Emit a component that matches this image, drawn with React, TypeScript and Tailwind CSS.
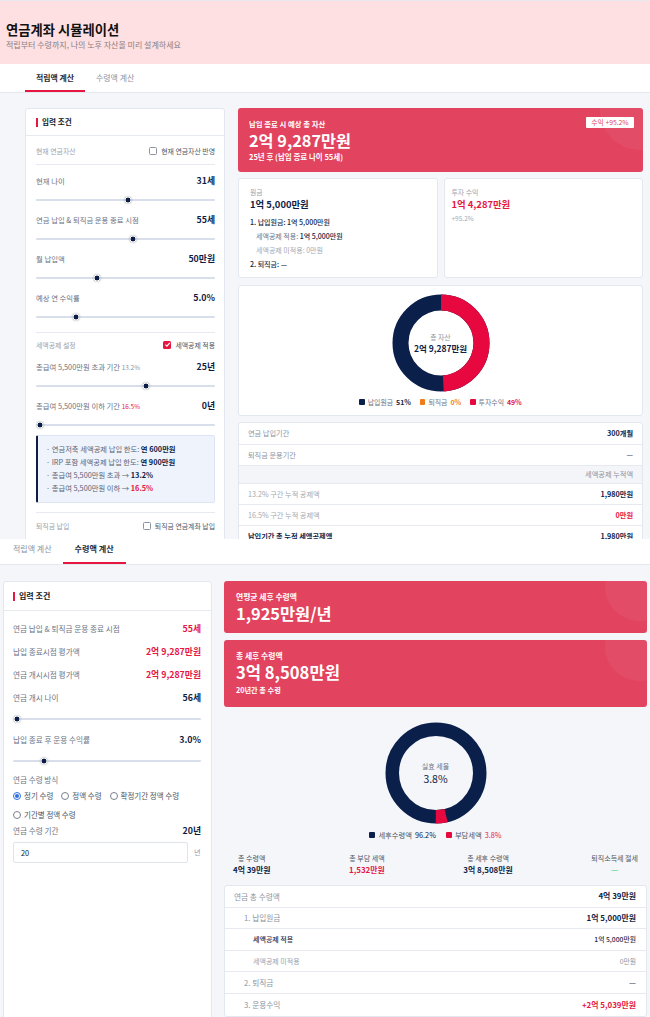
import React from "react";

// Two stacked views of the pension simulator: the accumulation tab on top,
// the payout tab below it. Everything is static sample data.

function Slider({ p, h = "h-[20px]" }: { p: number; h?: string }) {
  return (
    <div className={`relative ${h}`}>
      <div className="absolute left-0 right-0 top-1/2 h-[2px] -translate-y-1/2 rounded-full bg-[#d9dfea]" />
      <div
        className="absolute top-1/2 h-[7px] w-[7px] -translate-x-1/2 -translate-y-1/2 rounded-full border border-white bg-[#0c1d4a] shadow-[0_0_2px_rgba(0,0,0,0.35)]"
        style={{ left: `calc(3.5px + ${p} * (100% - 7px))` }}
      />
    </div>
  );
}

function Check({ on }: { on?: boolean }) {
  return on ? (
    <span className="flex h-[8px] w-[8px] items-center justify-center rounded-[1.5px] bg-[#e5163f]">
      <svg viewBox="0 0 10 10" className="h-[7px] w-[7px]">
        <path d="M2 5.2 4.2 7.4 8.3 2.7" fill="none" stroke="white" strokeWidth="1.7" />
      </svg>
    </span>
  ) : (
    <span className="h-[8px] w-[8px] rounded-[1.5px] border border-[#8d939e] bg-white" />
  );
}

function Radio({ on, label }: { on?: boolean; label: string }) {
  return (
    <span className="flex items-center gap-[3px] text-[7.5px] text-[#4b5563]">
      {on ? (
        <span className="flex h-[8px] w-[8px] items-center justify-center rounded-full border border-[#2f6fe0] bg-white">
          <span className="h-[4px] w-[4px] rounded-full bg-[#2f6fe0]" />
        </span>
      ) : (
        <span className="h-[8px] w-[8px] rounded-full border border-[#7b818c] bg-white" />
      )}
      {label}
    </span>
  );
}

function Row({
  label,
  value,
  valueClass = "text-[#0f1d45]",
  h = "h-[19px]",
  size = "text-[7.35px]",
}: {
  label: React.ReactNode;
  value: string;
  valueClass?: string;
  h?: string;
  size?: string;
}) {
  return (
    <div className={`flex items-center justify-between ${h}`}>
      <span className={`${size} text-[#6b7384]`}>{label}</span>
      <span className={`text-[8.8px] font-bold ${valueClass}`}>{value}</span>
    </div>
  );
}

function CardHeader({ pad, size }: { pad: string; size: string }) {
  return (
    <div className={`flex items-center gap-[4px] border-b border-[#e6e9f0] ${pad}`}>
      <span className="h-[9px] w-[2px] bg-[#e5163f]" />
      <span className={`${size} font-bold text-[#111827]`}>입력 조건</span>
    </div>
  );
}

function Donut({ size, r, stroke, redFrac, redStart }: { size: number; r: number; stroke: number; redFrac: number; redStart: number }) {
  const c = 2 * Math.PI * r;
  const mid = size / 2;
  return (
    <svg width={size} height={size} viewBox={`0 0 ${size} ${size}`}>
      <g transform={`rotate(-90 ${mid} ${mid})`}>
        <circle cx={mid} cy={mid} r={r} fill="none" stroke="#0b1f4b" strokeWidth={stroke} />
        <circle
          cx={mid}
          cy={mid}
          r={r}
          fill="none"
          stroke="#e6083e"
          strokeWidth={stroke}
          strokeDasharray={`${redFrac * c} ${c}`}
          strokeDashoffset={-redStart * c}
        />
      </g>
    </svg>
  );
}

function TopView() {
  return (
    <div className="h-[539px] overflow-hidden border-t border-[#e6e8ee]">
      <div className="h-[63px] bg-[#ffe0e2] pl-[6px] pt-[20px]">
        <div className="text-[13.3px] font-bold leading-[18px] text-[#111]">연금계좌 시뮬레이션</div>
        <div className="text-[8px] leading-[11px] text-[#8a7d80]">적립부터 수령까지, 나의 노후 자산을 미리 설계하세요</div>
      </div>
      <div className="flex h-[29px] border-b border-[#e5e8ef] bg-white pl-[25px]">
        <div className="relative flex items-center px-[11px] text-[7.9px] font-bold text-[#1f2937]">
          적립액 계산
          <span className="absolute bottom-0 left-0 right-0 h-[2px] bg-[#e5163f]" />
        </div>
        <div className="flex items-center px-[11px] text-[7.9px] text-[#8b93a1]">수령액 계산</div>
      </div>

      <div className="flex h-[446px] gap-[13px] bg-[#f4f6fa] pl-[25px] pr-[7px] pt-[15px]">
        {/* inputs */}
        <div className="h-[480px] w-[200px] shrink-0 rounded-[3px] border border-[#e3e7ef] bg-white">
          <CardHeader pad="h-[27px] px-[10px]" size="text-[7.6px]" />
          <div className="pl-[10px] pr-[9px]">
            <div className="flex h-[29px] items-center justify-between border-b border-[#e6e9f0] pt-[3px]">
              <span className="text-[6.9px] text-[#9aa1ad]">현재 연금자산</span>
              <span className="flex items-center gap-[4px] text-[6.9px] text-[#4b5563]">
                <Check />
                현재 연금자산 반영
              </span>
            </div>
            <div className="pt-[6px]">
              <Row label="현재 나이" value="31세" />
              <Slider p={0.514} />
              <Row label="연금 납입 & 퇴직금 운용 종료 시점" value="55세" />
              <Slider p={0.544} />
              <Row label="월 납입액" value="50만원" />
              <Slider p={0.334} />
              <Row label="예상 연 수익률" value="5.0%" />
              <Slider p={0.212} />
            </div>
            <div className="mt-[5px] border-t border-[#e6e9f0]">
              <div className="flex h-[24px] items-center justify-between">
                <span className="text-[6.9px] text-[#9aa1ad]">세액공제 설정</span>
                <span className="flex items-center gap-[4px] text-[6.9px] text-[#4b5563]">
                  <Check on />
                  세액공제 적용
                </span>
              </div>
              <Row
                label={
                  <>
                    총급여 5,500만원 초과 기간 <span className="text-[6.4px] text-[#8b93a1]">13.2%</span>
                  </>
                }
                value="25년"
              />
              <Slider p={0.619} />
              <Row
                label={
                  <>
                    총급여 5,500만원 이하 기간 <span className="text-[6.4px] text-[#e5163f]">16.5%</span>
                  </>
                }
                value="0년"
              />
              <Slider p={0} />
              <div className="rounded-[2px] border border-l-2 border-[#dde4f2] border-l-[#0f1d45] bg-[#eef3fc] py-[7px] pl-[8px] text-[7.3px] leading-[13px] text-[#5b6475]">
                <div>
                  · 연금저축 세액공제 납입 한도: <b className="text-[#0f1d45]">연 600만원</b>
                </div>
                <div>
                  · IRP 포함 세액공제 납입 한도: <b className="text-[#0f1d45]">연 900만원</b>
                </div>
                <div>
                  · 총급여 5,500만원 초과 → <b className="text-[#0f1d45]">13.2%</b>
                </div>
                <div>
                  · 총급여 5,500만원 이하 → <b className="text-[#e5163f]">16.5%</b>
                </div>
              </div>
            </div>
            <div className="mt-[9px] flex h-[28px] items-center justify-between border-t border-[#e6e9f0]">
              <span className="text-[6.9px] text-[#9aa1ad]">퇴직금 납입</span>
              <span className="flex items-center gap-[4px] text-[6.9px] text-[#4b5563]">
                <Check />
                퇴직금 연금계좌 납입
              </span>
            </div>
          </div>
        </div>

        {/* results */}
        <div className="min-w-0 flex-1">
          <div className="relative h-[64px] overflow-hidden rounded-[3px] bg-[#e2435f] pl-[11px] pt-[11px] text-white">
            <div className="absolute right-[-37px] top-[-38px] h-[80px] w-[80px] rounded-full bg-white/[0.05]" />
            <div className="text-[7.4px] font-bold leading-[10px]">납입 종료 시 예상 총 자산</div>
            <div className="text-[16.3px] font-bold leading-[22px]">2억 9,287만원</div>
            <div className="text-[7.5px] font-bold leading-[12px]">25년 후 (납입 종료 나이 55세)</div>
            <div className="absolute right-[9px] top-[9px] flex h-[11px] w-[48px] items-center justify-center rounded-[1px] bg-white text-[6.8px] text-[#e2435f]">
              수익 +95.2%
            </div>
          </div>

          <div className="mt-[6px] grid h-[100px] grid-cols-2 gap-[6px]">
            <div className="rounded-[3px] border border-[#e3e7ef] bg-white pl-[11px] pt-[8px]">
              <div className="text-[6.9px] leading-[10px] text-[#9aa1ad]">원금</div>
              <div className="text-[9.4px] font-bold leading-[14px] text-[#0f1d45]">1억 5,000만원</div>
              <div className="mt-[4px] text-[7px] leading-[14px]">
                <div className="font-medium text-[#0f1d45]">1. 납입원금: 1억 5,000만원</div>
                <div className="pl-[6px] text-[#6b7384]">
                  세액공제 적용: <span className="font-medium text-[#0f1d45]">1억 5,000만원</span>
                </div>
                <div className="pl-[6px] text-[#a3a9b4]">세액공제 미적용: 0만원</div>
                <div className="font-medium text-[#0f1d45]">2. 퇴직금: —</div>
              </div>
            </div>
            <div className="rounded-[3px] border border-[#e3e7ef] bg-white pl-[7px] pt-[8px]">
              <div className="text-[6.9px] leading-[10px] text-[#9aa1ad]">투자 수익</div>
              <div className="text-[9.4px] font-bold leading-[14px] text-[#e5163f]">1억 4,287만원</div>
              <div className="text-[6.5px] leading-[14px] text-[#a3a9b4]">+95.2%</div>
            </div>
          </div>

          <div className="mt-[7px] flex h-[131px] flex-col items-center rounded-[3px] border border-[#e3e7ef] bg-white pt-[7px]">
            <div className="relative h-[100px] w-[100px]">
              <Donut size={100} r={40.5} stroke={16} redFrac={0.49} redStart={0} />
              <div className="absolute inset-0 flex flex-col items-center justify-center pt-[1px]">
                <span className="text-[6.8px] leading-[10px] text-[#8b93a1]">총 자산</span>
                <span className="text-[8.5px] font-bold leading-[13px] text-[#0f1d45]">2억 9,287만원</span>
              </div>
            </div>
            <div className="mt-[4px] flex items-center gap-[9px] text-[6.9px] leading-[10px]">
              <span className="flex items-center gap-[3px] text-[#6b7384]">
                <span className="h-[5.5px] w-[5.5px] rounded-[1px] bg-[#0b1f4b]" />
                납입원금 <b className="text-[#0f1d45]">51%</b>
              </span>
              <span className="flex items-center gap-[3px] text-[#6b7384]">
                <span className="h-[5.5px] w-[5.5px] rounded-[1px] bg-[#f07d1a]" />
                퇴직금 <b className="text-[#f07d1a]">0%</b>
              </span>
              <span className="flex items-center gap-[3px] text-[#6b7384]">
                <span className="h-[5.5px] w-[5.5px] rounded-[1px] bg-[#e6083e]" />
                투자수익 <b className="text-[#e5163f]">49%</b>
              </span>
            </div>
          </div>

          <div className="mt-[6px] rounded-[3px] border border-[#e3e7ef] bg-white text-[7.2px]">
            <div className="flex h-[22px] items-center justify-between border-b border-[#e6e9f0] px-[9px]">
              <span className="text-[#8b93a1]">연금 납입기간</span>
              <span className="font-bold text-[#0f1d45]">300개월</span>
            </div>
            <div className="flex h-[21px] items-center justify-between border-b border-[#e6e9f0] px-[9px]">
              <span className="text-[#8b93a1]">퇴직금 운용기간</span>
              <span className="font-bold text-[#6b7384]">—</span>
            </div>
            <div className="flex h-[18px] items-center justify-end border-b border-[#e6e9f0] bg-[#f3f5f9] px-[9px]">
              <span className="text-[#8b93a1]">세액공제 누적액</span>
            </div>
            <div className="flex h-[21px] items-center justify-between border-b border-[#e6e9f0] px-[9px]">
              <span className="text-[#a3a9b4]">13.2% 구간 누적 공제액</span>
              <span className="font-bold text-[#0f1d45]">1,980만원</span>
            </div>
            <div className="flex h-[21px] items-center justify-between border-b border-[#e6e9f0] px-[9px]">
              <span className="text-[#a3a9b4]">16.5% 구간 누적 공제액</span>
              <span className="font-bold text-[#e5163f]">0만원</span>
            </div>
            <div className="flex h-[21px] items-center justify-between px-[9px]">
              <span className="font-bold text-[#0f1d45]">납입기간 총 누적 세액공제액</span>
              <span className="font-bold text-[#0f1d45]">1,980만원</span>
            </div>
          </div>
        </div>
      </div>
    </div>
  );
}

function Stat({ label, value, valueClass }: { label: string; value: string; valueClass: string }) {
  return (
    <div className="flex flex-col items-center">
      <span className="text-[7px] leading-[12px] text-[#4b5563]">{label}</span>
      <span className={`text-[7.9px] font-bold leading-[12px] ${valueClass}`}>{value}</span>
    </div>
  );
}

function TRow({ label, value, labelClass, valueClass, last }: { label: string; value: string; labelClass: string; valueClass: string; last?: boolean }) {
  return (
    <div className={`flex h-[21.6px] items-center justify-between pl-[9px] pr-[10px] ${last ? "" : "border-b border-[#e6e9f0]"}`}>
      <span className={labelClass}>{label}</span>
      <span className={valueClass}>{value}</span>
    </div>
  );
}

function BottomView() {
  return (
    <div className="h-[478px] overflow-hidden">
      <div className="flex h-[26px] border-b border-[#e5e8ef] bg-white pl-[2px]">
        <div className="flex items-start px-[11px] pt-[3px] text-[8px] leading-[14px] text-[#8b93a1]">적립액 계산</div>
        <div className="relative flex items-start px-[12px] pt-[3px] text-[8.1px] font-bold leading-[14px] text-[#1f2937]">
          수령액 계산
          <span className="absolute bottom-0 left-0 right-0 h-[2px] bg-[#e5163f]" />
        </div>
      </div>

      <div className="flex h-[460px] gap-[12px] bg-[#f4f6fa] pl-[3px] pr-[3px] pt-[16px]">
        <div className="h-[520px] w-[209px] shrink-0 rounded-[3px] border border-[#e3e7ef] bg-white">
          <CardHeader pad="h-[29px] px-[9px]" size="text-[8px]" />
          <div className="pl-[9px] pr-[10px] pt-[6px]">
            <Row label="연금 납입 & 퇴직금 운용 종료 시점" value="55세" valueClass="text-[#e5163f]" h="h-[23px]" size="text-[7.65px]" />
            <Row label="납입 종료시점 평가액" value="2억 9,287만원" valueClass="text-[#e5163f]" h="h-[23px]" size="text-[7.65px]" />
            <Row label="연금 개시시점 평가액" value="2억 9,287만원" valueClass="text-[#e5163f]" h="h-[23px]" size="text-[7.65px]" />
            <Row label="연금 개시 나이" value="56세" h="h-[23px]" size="text-[7.65px]" />
            <Slider p={0} h="h-[19px]" />
            <Row label="납입 종료 후 운용 수익률" value="3.0%" h="h-[23px]" size="text-[7.65px]" />
            <Slider p={0.152} h="h-[19px]" />
            <div className="flex h-[19px] items-center text-[7.6px] text-[#6b7384]">연금 수령 방식</div>
            <div className="flex h-[14px] items-center gap-[8px]">
              <Radio on label="정기 수령" />
              <Radio label="정액 수령" />
              <Radio label="확정기간 정액 수령" />
            </div>
            <div className="mt-[5px] flex h-[14px] items-center">
              <Radio label="기간별 정액 수령" />
            </div>
            <Row label="연금 수령 기간" value="20년" h="h-[18px]" size="text-[7.65px]" />
            <div className="mt-[2px] flex items-center gap-[6px]">
              <div className="flex h-[21px] w-[175px] items-center rounded-[2px] border border-[#dfe3ea] pl-[7px] text-[7.4px] text-[#111827]">20</div>
              <span className="text-[7.2px] text-[#9aa1ad]">년</span>
            </div>
          </div>
        </div>

        <div className="min-w-0 flex-1">
          <div className="relative h-[52px] overflow-hidden rounded-[3px] bg-[#e2435f] pl-[12px] pt-[11px] text-white">
            <div className="absolute right-[-28px] top-[-30px] h-[70px] w-[70px] rounded-full bg-white/[0.05]" />
            <div className="text-[7.8px] font-bold leading-[10px]">연평균 세후 수령액</div>
            <div className="text-[16.4px] font-bold leading-[22px]">1,925만원/년</div>
          </div>
          <div className="relative mt-[7px] h-[67px] overflow-hidden rounded-[3px] bg-[#e2435f] pl-[12px] pt-[11px] text-white">
            <div className="absolute right-[-28px] top-[-29px] h-[70px] w-[70px] rounded-full bg-white/[0.05]" />
            <div className="text-[7.8px] font-bold leading-[10px]">총 세후 수령액</div>
            <div className="text-[16.6px] font-bold leading-[22px]">3억 8,508만원</div>
            <div className="mt-[1px] text-[7.2px] font-bold leading-[12px]">20년간 총 수령</div>
          </div>

          <div className="mt-[14px] flex flex-col items-center">
            <div className="relative h-[104px] w-[104px]">
              <Donut size={104} r={43.75} stroke={13.5} redFrac={0.038} redStart={0.462} />
              <div className="absolute inset-0 flex flex-col items-center justify-center">
                <span className="text-[7px] leading-[11px] text-[#6b7384]">실효 세율</span>
                <span className="text-[10.5px] leading-[14px] text-[#0f1d45]">3.8%</span>
              </div>
            </div>
            <div className="mt-[4px] flex items-center gap-[10px] text-[7.3px] leading-[12px]">
              <span className="flex items-center gap-[3px] text-[#4b5563]">
                <span className="h-[6px] w-[6px] rounded-[1px] bg-[#0b1f4b]" />
                세후수령액 <span className="text-[#0f1d45]">96.2%</span>
              </span>
              <span className="flex items-center gap-[3px] text-[#4b5563]">
                <span className="h-[6px] w-[6px] rounded-[1px] bg-[#e6083e]" />
                부담세액 <span className="text-[#e5163f]">3.8%</span>
              </span>
            </div>
          </div>

          <div className="mt-[11px] flex justify-between px-[9px]">
            <Stat label="총 수령액" value="4억 39만원" valueClass="text-[#0f1d45]" />
            <Stat label="총 부담 세액" value="1,532만원" valueClass="text-[#e5163f]" />
            <Stat label="총 세후 수령액" value="3억 8,508만원" valueClass="text-[#0f1d45]" />
            <Stat label="퇴직소득세 절세" value="—" valueClass="text-[#6fd6a0]" />
          </div>

          <div className="mt-[9px] rounded-[3px] border border-[#e3e7ef] bg-white text-[7.7px]">
            <TRow label="연금 총 수령액" value="4억 39만원" labelClass="text-[#8b93a1]" valueClass="font-bold text-[7.9px] text-[#0f1d45]" />
            <TRow label="1. 납입원금" value="1억 5,000만원" labelClass="pl-[10px] text-[#8b93a1]" valueClass="font-bold text-[7.9px] text-[#0f1d45]" />
            <TRow label="세액공제 적용" value="1억 5,000만원" labelClass="pl-[19px] text-[7px] font-medium text-[#1f2a4d]" valueClass="text-[6.8px] font-medium text-[#1f2a4d]" />
            <TRow label="세액공제 미적용" value="0만원" labelClass="pl-[19px] text-[7px] text-[#9aa1ad]" valueClass="text-[6.8px] text-[#8b93a1]" />
            <TRow label="2. 퇴직금" value="—" labelClass="pl-[10px] text-[#8b93a1]" valueClass="font-bold text-[#6b7384]" />
            <TRow label="3. 운용수익" value="+2억 5,039만원" labelClass="pl-[10px] text-[#8b93a1]" valueClass="font-bold text-[7.9px] text-[#e5163f]" last />
          </div>
        </div>
      </div>
    </div>
  );
}

export default function App() {
  return (
    <div className="h-[1017px] w-[650px] overflow-hidden bg-white font-['Noto_Sans_CJK_KR','Noto_Sans',sans-serif]">
      <TopView />
      <BottomView />
    </div>
  );
}
